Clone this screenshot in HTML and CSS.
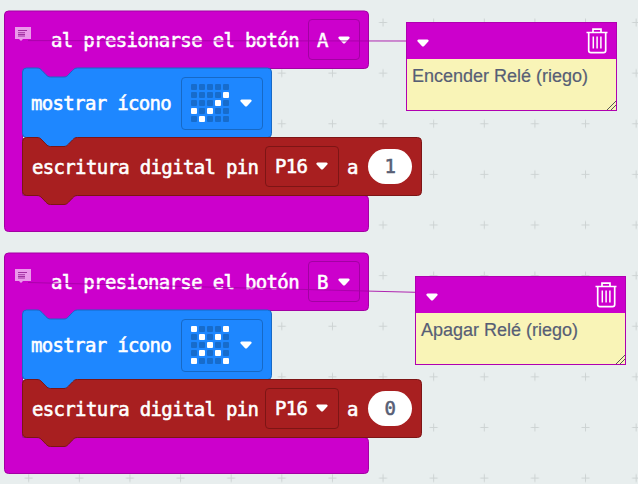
FILE: index.html
```
<!DOCTYPE html>
<html lang="es">
<head>
<meta charset="utf-8">
<title>Bloques</title>
<link rel="stylesheet" href="styles.css">
</head>
<body>
<svg class="defs" width="0" height="0" aria-hidden="true">
  <defs>
    <g id="shapes">
      <path class="event" d="M8.5 11H364.500q4 0 4 4V64.500q0 4-4 4H77.500c-2.500 0-3.500 1-5 2.500l-4 4.200c-1.500 1.500-2.500 2.300-4.500 2.300H50.500c-2 0-3-.8-4.500-2.300l-4-4.200c-1.500-1.500-2.500-2.500-5-2.500H28L22.500 73V195.500H364.500q4 0 4 4V227.500q0 4-4 4H8.500q-4 0-4-4V15q0-4 4-4z"/>
      <path class="show" d="M22.500 72q0-4 4-4H37c2.500 0 3.500 1 5 2.500l4 4.200c1.500 1.500 2.500 2.300 4.500 2.300H64c2 0 3-.8 4.500-2.300l4-4.200C74 69 75 68 77.500 68H267.500q4 0 4 4V133.500q0 4-4 4H77.500c-2.500 0-3.500 1-5 2.500l-4 4.200c-1.500 1.500-2.500 2.300-4.500 2.300H50.500c-2 0-3-.8-4.500-2.300l-4-4.200c-1.500-1.500-2.500-2.500-5-2.500H26.500q-4 0-4-4z"/>
      <path class="write" d="M22.500 141.500q0-4 4-4H37c2.500 0 3.500 1 5 2.500l4 4.200c1.500 1.500 2.500 2.300 4.500 2.300H64c2 0 3-.8 4.500-2.300l4-4.200c1.500-1.500 2.500-2.500 5-2.500H417.500q4 0 4 4V191.500q0 4-4 4H77.500c-2.500 0-3.500 1-5 2.500l-4 4.200c-1.500 1.500-2.500 2.300-4.500 2.300H50.500c-2 0-3-.8-4.500-2.300l-4-4.200c-1.500-1.500-2.500-2.500-5-2.500H26.500q-4 0-4-4z"/>
    </g>
    <path id="caret" d="M1.500 .5H10.500Q12.300 1 11.300 2.500L7.200 7Q6 8 4.800 7L.7 2.500Q-.3 1 1.500 .5z"/>
    <g id="trash" fill="none" stroke="#fff">
      <path stroke-width="1.700" d="M.5 4.500H21.500M7 4V1.200H15V4M2.700 5V22.500Q2.700 24.700 5 24.700H17.500Q19.700 24.700 19.700 22.500V5"/>
      <path stroke-width="1.500" d="M7.300 8.500V20.500M11.100 8.500V20.500M14.900 8.500V20.500"/>
    </g>
    <g id="note">
      <path fill="#eb99eb" d="M0 0H16V12H8L6 14 4 12H0z"/>
      <path stroke="#a030a0" stroke-width="1.100" d="M3 3.500H12M3 5.700H10M3 7.500H10"/>
      <path stroke="#a030a0" d="M3 9H10"/>
    </g>
    <pattern id="grid" x="3.400" y="-2.800" width="50.620" height="50.620" patternUnits="userSpaceOnUse">
      <path d="M21.300 25.300H29.300M25.300 21.300V29.300" stroke="#cdd3d3" stroke-width="1"/>
    </pattern>
  </defs>
</svg>
<main class="workspace">
  <svg class="layer" width="638" height="484"><rect width="638" height="484" fill="url(#grid)"/></svg>

  <section class="stack first">
    <svg class="outline" width="420" height="224" viewBox="4 10 420 224"><use href="#shapes"/></svg>
    <div class="row head">
      <svg class="note" width="16" height="14"><use href="#note"/></svg>
      <span>al presionarse el botón</span>
      <div class="field button"><span>A</span><svg width="12" height="8"><use href="#caret"/></svg></div>
    </div>
    <div class="row icon">
      <span>mostrar ícono</span>
      <div class="field leds">
        <div class="matrix"><i></i><i></i><i></i><i></i><i></i><i></i><i></i><i></i><i></i><i class="on"></i><i></i><i></i><i></i><i class="on"></i><i></i><i class="on"></i><i></i><i class="on"></i><i></i><i></i><i></i><i class="on"></i><i></i><i></i><i></i></div>
        <svg width="12" height="8"><use href="#caret"/></svg>
      </div>
    </div>
    <div class="row digital">
      <span>escritura digital pin</span>
      <div class="field pin"><span>P16</span><svg width="12" height="8"><use href="#caret"/></svg></div>
      <span class="to">a</span>
      <div class="value">1</div>
    </div>
  </section>

  <section class="stack second">
    <svg class="outline" width="420" height="224" viewBox="4 10 420 224"><use href="#shapes"/></svg>
    <div class="row head">
      <svg class="note" width="16" height="14"><use href="#note"/></svg>
      <span>al presionarse el botón</span>
      <div class="field button"><span>B</span><svg width="12" height="8"><use href="#caret"/></svg></div>
    </div>
    <div class="row icon">
      <span>mostrar ícono</span>
      <div class="field leds">
        <div class="matrix"><i class="on"></i><i></i><i></i><i></i><i class="on"></i><i></i><i class="on"></i><i></i><i class="on"></i><i></i><i></i><i></i><i class="on"></i><i></i><i></i><i></i><i class="on"></i><i></i><i class="on"></i><i></i><i class="on"></i><i></i><i></i><i></i><i class="on"></i></div>
        <svg width="12" height="8"><use href="#caret"/></svg>
      </div>
    </div>
    <div class="row digital">
      <span>escritura digital pin</span>
      <div class="field pin"><span>P16</span><svg width="12" height="8"><use href="#caret"/></svg></div>
      <span class="to">a</span>
      <div class="value">0</div>
    </div>
  </section>

  <svg class="layer" width="638" height="484">
    <path class="link" d="M28 40.600L407 41M28 282.500L416 292.300"/>
  </svg>

  <article class="comment one">
    <header><svg width="12" height="8"><use href="#caret"/></svg><svg width="22" height="26"><use href="#trash"/></svg></header>
    <p>Encender Relé (riego)</p>
    <svg class="grip" width="9" height="9"><path d="M0 9L9 0M4 9L9 4"/></svg>
  </article>
  <article class="comment two">
    <header><svg width="12" height="8"><use href="#caret"/></svg><svg width="22" height="26"><use href="#trash"/></svg></header>
    <p>Apagar Relé (riego)</p>
    <svg class="grip" width="9" height="9"><path d="M0 9L9 0M4 9L9 4"/></svg>
  </article>
</main>
</body>
</html>
```
FILE: styles.css
```
* { box-sizing: border-box; }
body { margin: 0; overflow: hidden; }
svg { display: block; flex: none; fill: #fff; }
.defs { position: absolute; }
.workspace {
  position: relative;
  width: 638px;
  height: 484px;
  overflow: hidden;
  background: #e8eeee;
}
.layer { position: absolute; left: 0; top: 0; pointer-events: none; }
.stack {
  position: absolute;
  left: 4px;
  width: 420px;
  height: 224px;
  padding-top: 1px;
  color: #fff;
  font-family: "DejaVu Sans Mono", "Liberation Mono", monospace;
  font-size: 19px;
  letter-spacing: -0.66px;
  line-height: 24px;
  white-space: nowrap;
  -webkit-text-stroke: 0.55px currentColor;
}
.first { top: 10px; }
.second { top: 252px; }
.outline { position: absolute; left: 0; top: 0; }
.event { fill: #cc00cc; stroke: #a300a3; }
.show { fill: #1e87ff; stroke: #1769c6; }
.write { fill: #a81f20; stroke: #7d1515; }
.row { position: relative; display: flex; align-items: center; }
.head { height: 57px; padding-left: 11px; }
.head > span { width: 248px; }
.note { margin: -11px 20px 0 0; }
.icon { height: 70px; padding-left: 27px; }
.icon > span { width: 141px; }
.digital { height: 58px; padding-left: 28px; }
.digital > span:first-child { width: 226px; }
.field {
  display: flex;
  align-items: center;
  flex: none;
  height: 41px;
  border: 1px solid;
  border-radius: 4px;
}
.button { width: 52px; margin-left: 9px; padding-left: 8px; gap: 10px; border-color: #a300a3; }
.leds { width: 82px; height: 53px; margin-left: 9px; padding-left: 9px; gap: 11px; border-color: #1769c6; }
.pin { width: 74px; margin: -2px 0 0 7px; padding-left: 9px; gap: 9px; border-color: #7d1515; }
.matrix { display: grid; grid-template-columns: repeat(5, 6px); gap: 2.1px; }
.matrix i { height: 6px; border-radius: 1px; background: #176ccc; }
.matrix .on { background: #fff; }
.to { margin: 0 10px 0 8px; }
.value {
  width: 44px;
  height: 35px;
  margin-top: -1px;
  border-radius: 18px;
  background: #fff;
  color: #575e75;
  line-height: 35px;
  text-align: center;
}
.link { fill: none; stroke: #a500a5; stroke-width: 1; stroke-opacity: .85; }
.comment {
  position: absolute;
  width: 211px;
  height: 89px;
  border: 1px solid #b000b0;
  background: #f9f4b7;
}
.one { left: 406px; top: 22px; }
.two { left: 415px; top: 276px; }
.comment header {
  display: flex;
  align-items: center;
  justify-content: space-between;
  height: 36px;
  padding: 3px 8px 3px 9.500px;
  background: #cc00cc;
}
.comment header svg:first-child { margin-top: 3px; }
.comment p {
  margin: 6px 0 0 5px;
  color: #575e75;
  font: 18px/22px "Liberation Sans", sans-serif;
  -webkit-text-stroke: 0.2px currentColor;
  white-space: nowrap;
}
.grip { position: absolute; right: 0; bottom: 0; stroke: #555; }
```
